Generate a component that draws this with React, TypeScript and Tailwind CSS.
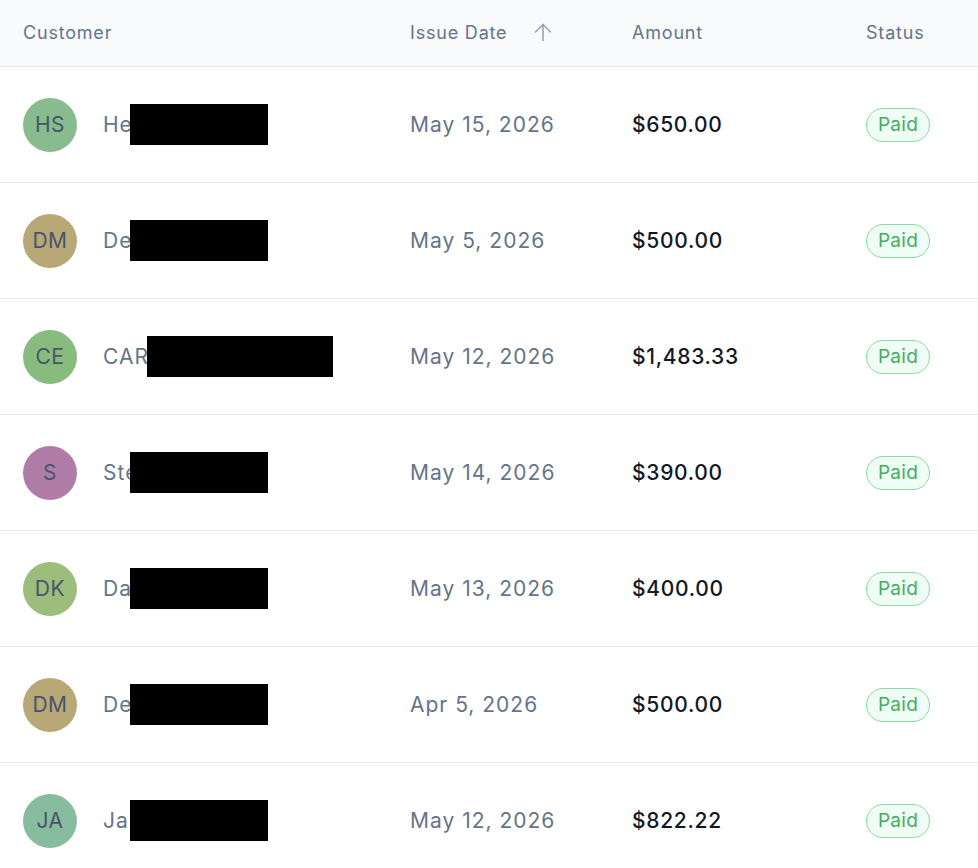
import React from "react";

type Row = {
  initials: string;
  color: string;
  name: string;
  box: number;
  date: string;
  amount: string;
};

const rows: Row[] = [
  { initials: "HS", color: "bg-[#88bb8e]", name: "He", box: 138, date: "May 15, 2026", amount: "$650.00" },
  { initials: "DM", color: "bg-[#b8a878]", name: "De", box: 138, date: "May 5, 2026", amount: "$500.00" },
  { initials: "CE", color: "bg-[#88bb7e]", name: "CAR", box: 186, date: "May 12, 2026", amount: "$1,483.33" },
  { initials: "S", color: "bg-[#b07ca8]", name: "Ste", box: 138, date: "May 14, 2026", amount: "$390.00" },
  { initials: "DK", color: "bg-[#9cbd7c]", name: "Da", box: 138, date: "May 13, 2026", amount: "$400.00" },
  { initials: "DM", color: "bg-[#b8a878]", name: "De", box: 138, date: "Apr 5, 2026", amount: "$500.00" },
  { initials: "JA", color: "bg-[#88bc9e]", name: "Jar", box: 138, date: "May 12, 2026", amount: "$822.22" },
];

export default function App() {
  return (
    <div className="w-[978px] h-[868px] overflow-hidden bg-white" style={{ fontFamily: "Inter, 'Noto Sans', sans-serif" }}>
      <div className="grid grid-cols-[387px_222px_234px_1fr] pl-[23px] h-[67px] items-center bg-[#f8fafc] border-b border-[#e5e7eb] text-[18px] tracking-[0.8px] text-[#64748b]">
        <div className="-mt-[2px]">Customer</div>
        <div className="flex items-center -mt-[2px]">
          <span>Issue Date</span>
          <svg
            className="ml-[26px]"
            width="20"
            height="20"
            viewBox="0 0 20 20"
            fill="none"
            stroke="#9ca3af"
            strokeWidth="1.6"
            strokeLinecap="round"
            strokeLinejoin="round"
          >
            <path d="M2.5 10 L10 2.5 L17.5 10" />
            <path d="M10 2.5 V18.5" />
          </svg>
        </div>
        <div className="-mt-[2px]">Amount</div>
        <div className="-mt-[2px]">Status</div>
      </div>
      {rows.map((r, i) => (
        <div
          key={i}
          className="grid grid-cols-[387px_222px_234px_1fr] pl-[23px] h-[116px] items-center border-b border-[#ebebeb]"
        >
          <div className="flex items-center">
            <div className={`w-[54px] h-[54px] rounded-full ${r.color} flex items-center justify-center text-[21px] tracking-[0.5px] text-[#475569]`}>
              {r.initials}
            </div>
            <div className="relative ml-[26px] text-[21px] tracking-[1px] text-[#64748b] h-[41px] flex items-center">
              <span>{r.name}</span>
              <div
                className="absolute top-0 h-[41px] bg-black"
                style={{ left: r.name === "CAR" ? 44 : 27, width: r.box }}
              />
            </div>
          </div>
          <div className="text-[21px] text-[#64748b] tracking-[1px]">{r.date}</div>
          <div className="text-[21px] font-medium text-[#111827] tracking-[0.7px]">{r.amount}</div>
          <div>
            <span className="inline-flex items-center justify-center w-[64px] h-[34px] pt-[2px] rounded-full border border-[#86dfa2] bg-[#f0fdf4] text-[19px] tracking-[0.3px] text-[#43ad63]">
              Paid
            </span>
          </div>
        </div>
      ))}
    </div>
  );
}
